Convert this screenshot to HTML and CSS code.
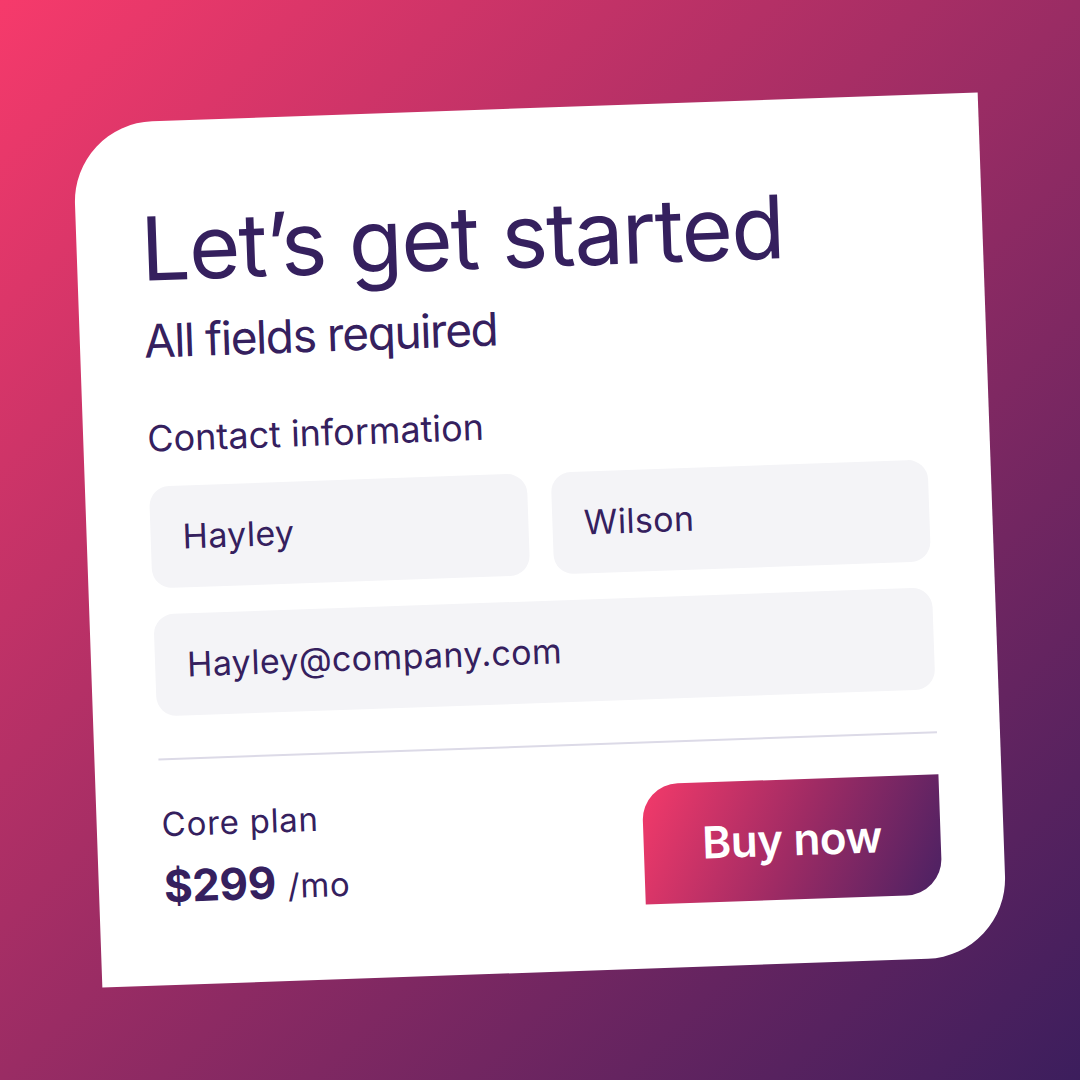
FILE: index.html
```html
<!DOCTYPE html>
<html lang="en">
<head>
<meta charset="utf-8">
<title>Let's get started</title>
<link rel="stylesheet" href="styles.css">
</head>
<body>
<main class="stage">
  <section class="card">
    <h1 class="title">Let’s get started</h1>
    <p class="subtitle">All fields required</p>
    <h2 class="section-label">Contact information</h2>
    <div class="fields">
      <div class="field">Hayley</div>
      <div class="field">Wilson</div>
      <div class="field field-wide">Hayley@company.com</div>
    </div>
    <hr class="divider">
    <div class="footer">
      <div class="plan">
        <div class="plan-name">Core plan</div>
        <div class="plan-price"><span class="amount">$299</span><span class="period">/mo</span></div>
      </div>
      <button class="buy">Buy now</button>
    </div>
  </section>
</main>
</body>
</html>
```

FILE: styles.css
```css
* { box-sizing: border-box; }

html, body {
  margin: 0;
  padding: 0;
}

body {
  width: 1080px;
  height: 1080px;
  overflow: hidden;
  font-family: Inter, "Noto Sans", "Liberation Sans", sans-serif;
  color: #35205e;
  background: linear-gradient(135deg, #f63a6b 0%, #9a2c64 50%, #3c1e5d 100%);
}

.stage {
  width: 1080px;
  height: 1080px;
  display: flex;
  align-items: center;
  justify-content: center;
}

.card {
  width: 906px;
  height: 864px;
  background: #ffffff;
  border-radius: 80px 0 80px 0;
  transform: rotate(-2deg);
  padding: 83px 63px 64px 64px;
  display: flex;
  flex-direction: column;
}

.title {
  margin: 0;
  font-size: 88px;
  line-height: 1;
  font-weight: 400;
  letter-spacing: -0.017em;
}

.subtitle {
  margin: 25px 0 0;
  font-size: 46px;
  line-height: 1;
  font-weight: 400;
  letter-spacing: -0.03em;
}

.section-label {
  margin: 57px 0 0;
  font-size: 36px;
  line-height: 1;
  font-weight: 400;
  letter-spacing: 0;
}

.fields {
  margin-top: 30px;
  display: grid;
  grid-template-columns: 1fr 1fr;
  column-gap: 24px;
  row-gap: 26px;
}

.field {
  height: 102px;
  background: #f4f4f7;
  border-radius: 20px;
  display: flex;
  align-items: center;
  padding: 0 32px;
  font-size: 34px;
  line-height: 1;
  letter-spacing: 0.01em;
}

.field-wide {
  grid-column: 1 / -1;
}

.divider {
  margin: 42px 0 0;
  border: 0;
  height: 2px;
  background: #dcdae7;
}

.footer {
  margin-top: 41px;
  display: flex;
  align-items: center;
  justify-content: space-between;
}

.plan {
  display: flex;
  flex-direction: column;
  gap: 23px;
  padding-left: 1px;
  margin-top: -6px;
}

.plan-name {
  font-size: 33px;
  line-height: 1;
  letter-spacing: 0.022em;
}

.plan-price {
  display: flex;
  align-items: baseline;
}

.amount {
  font-size: 44px;
  line-height: 1;
  font-weight: 700;
  letter-spacing: -0.01em;
}

.period {
  margin-left: 12px;
  font-size: 33px;
  line-height: 1;
  letter-spacing: 0.02em;
}

.buy {
  width: 297px;
  height: 120px;
  border: 0;
  border-radius: 36px 0 36px 0;
  background: linear-gradient(115deg, #f43a6a 0%, #a02b64 50%, #4a2163 100%);
  color: #ffffff;
  font-family: inherit;
  font-size: 44px;
  font-weight: 600;
  letter-spacing: -0.01em;
  line-height: 1;
  padding: 0;
}
```
